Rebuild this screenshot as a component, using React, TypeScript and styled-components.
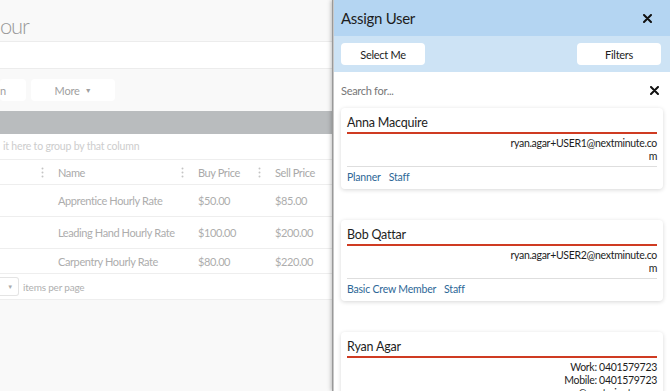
import React from 'react';
import styled, { createGlobalStyle } from 'styled-components';

const GlobalStyle = createGlobalStyle`
  html, body {
    margin: 0;
    padding: 0;
    background: #f9f9f9;
  }
  body {
    font-family: Lato, "Open Sans", sans-serif;
  }
`;

interface User {
  name: string;
  lines: string[];
  roles: string[];
}

const users: User[] = [
  {
    name: 'Anna Macquire',
    lines: ['ryan.agar+USER1@nextminute.co', 'm'],
    roles: ['Planner', 'Staff'],
  },
  {
    name: 'Bob Qattar',
    lines: ['ryan.agar+USER2@nextminute.co', 'm'],
    roles: ['Basic Crew Member', 'Staff'],
  },
  {
    name: 'Ryan Agar',
    lines: ['Work: 0401579723', 'Mobile: 0401579723', 'ryan.agar@nextminute.com'],
    roles: [],
  },
];

const rates = [
  { name: 'Apprentice Hourly Rate', buy: '$50.00', sell: '$85.00' },
  { name: 'Leading Hand Hourly Rate', buy: '$100.00', sell: '$200.00' },
  { name: 'Carpentry Hourly Rate', buy: '$80.00', sell: '$220.00' },
];

const Kebab = () => (
  <KebabIcon width="3" height="11" viewBox="0 0 3 11">
    <circle cx="1.5" cy="1.5" r="1" fill="#c4c4c4" />
    <circle cx="1.5" cy="5.5" r="1" fill="#c4c4c4" />
    <circle cx="1.5" cy="9.5" r="1" fill="#c4c4c4" />
  </KebabIcon>
);

const CloseIcon = () => (
  <svg width="9" height="9" viewBox="0 0 9 9">
    <path d="M1 1 L8 8 M8 1 L1 8" stroke="#111" strokeWidth="2" strokeLinecap="round" />
  </svg>
);

const App: React.FC = () => {
  return (
    <Screen>
      <GlobalStyle />
      <Page>
        <TitleBar>our</TitleBar>
        <WhiteBand />
        <Toolbar>
          <ToolButton $width={26} $align="flex-start">
            n
          </ToolButton>
          <ToolButton $width={84}>
            More <Caret>▼</Caret>
          </ToolButton>
        </Toolbar>
        <GrayBand />
        <GroupRow>it here to group by that column</GroupRow>
        <HeaderRow>
          <Cell $width={50}>
            <Kebab />
          </Cell>
          <Cell $width={140}>
            <span>Name</span>
            <Kebab />
          </Cell>
          <Cell $width={77}>
            <span>Buy Price</span>
            <Kebab />
          </Cell>
          <Cell $width={66}>
            <span>Sell Price</span>
          </Cell>
        </HeaderRow>
        {rates.map((r, i) => (
          <DataRow key={r.name} $height={i === 2 ? 25 : 32}>
            <Cell $width={50} />
            <Cell $width={140}>{r.name}</Cell>
            <Cell $width={77}>{r.buy}</Cell>
            <Cell $width={66}>{r.sell}</Cell>
          </DataRow>
        ))}
        <Pager>
          <PageSelect>▼</PageSelect>
          <span>items per page</span>
        </Pager>
      </Page>

      <Drawer>
        <DrawerHeader>
          <DrawerTitle>Assign User</DrawerTitle>
          <IconButton>
            <CloseIcon />
          </IconButton>
        </DrawerHeader>
        <ActionBar>
          <ActionButton>Select Me</ActionButton>
          <ActionButton>Filters</ActionButton>
        </ActionBar>
        <SearchRow>
          <SearchInput placeholder="Search for..." />
          <IconButton>
            <CloseIcon />
          </IconButton>
        </SearchRow>
        <CardList>
          {users.map((u) => (
            <Card key={u.name}>
              <CardName>{u.name}</CardName>
              <CardDetails>
                {u.lines.map((l, i) => (
                  <div key={i}>{l}</div>
                ))}
              </CardDetails>
              {u.roles.length > 0 && (
                <Roles>
                  {u.roles.map((r) => (
                    <Role key={r}>{r}</Role>
                  ))}
                </Roles>
              )}
            </Card>
          ))}
        </CardList>
      </Drawer>
    </Screen>
  );
};

export default App;

const Screen = styled.div`
  display: flex;
  width: 670px;
  height: 391px;
  overflow: hidden;
`;

const Page = styled.div`
  width: 333px;
  flex-shrink: 0;
  background: #f9f9f9;
  display: flex;
  flex-direction: column;
  overflow: hidden;
`;

const TitleBar = styled.div`
  height: 42px;
  box-sizing: border-box;
  border-bottom: 1px solid #ececec;
  font-size: 22px;
  font-weight: 300;
  letter-spacing: -1.2px;
  color: #999;
  line-height: 52px;
  white-space: nowrap;
`;

const WhiteBand = styled.div`
  height: 27px;
  box-sizing: border-box;
  background: #fff;
  border-bottom: 1px solid #ececec;
`;

const Toolbar = styled.div`
  height: 42px;
  display: flex;
  align-items: center;
  gap: 5px;
`;

const ToolButton = styled.div<{ $width: number; $align?: string }>`
  width: ${(p) => p.$width}px;
  height: 22px;
  background: #fff;
  border-radius: 4px;
  display: flex;
  align-items: center;
  justify-content: ${(p) => p.$align || 'center'};
  gap: 5px;
  font-size: 11px;
  letter-spacing: -0.2px;
  color: #a0a0a0;
`;

const Caret = styled.span`
  font-size: 7px;
`;

const GrayBand = styled.div`
  height: 23px;
  background: #b9bcbe;
`;

const GroupRow = styled.div`
  height: 26px;
  box-sizing: border-box;
  background: #fff;
  border-bottom: 1px solid #eee;
  font-size: 10.5px;
  letter-spacing: -0.2px;
  color: #cdcdcd;
  line-height: 25px;
  padding-left: 3px;
  white-space: nowrap;
`;

const HeaderRow = styled.div`
  height: 25px;
  box-sizing: border-box;
  display: flex;
  background: #fff;
  border-bottom: 1px solid #eee;
  font-size: 11px;
  letter-spacing: -0.4px;
  color: #a9a9a9;
`;

const DataRow = styled.div<{ $height: number }>`
  height: ${(p) => p.$height}px;
  box-sizing: border-box;
  display: flex;
  background: #fff;
  border-bottom: 1px solid #eee;
  font-size: 11px;
  letter-spacing: -0.4px;
  color: #adadad;
`;

const Cell = styled.div<{ $width: number }>`
  width: ${(p) => p.$width}px;
  flex-shrink: 0;
  display: flex;
  align-items: center;
  padding: 0 6px 0 8px;
  box-sizing: border-box;
  white-space: nowrap;
`;

const KebabIcon = styled.svg`
  margin-left: auto;
  flex-shrink: 0;
`;

const Pager = styled.div`
  height: 26px;
  box-sizing: border-box;
  background: #fff;
  border-bottom: 1px solid #eee;
  display: flex;
  align-items: center;
  gap: 4px;
  font-size: 10px;
  letter-spacing: -0.2px;
  color: #b0b0b0;
`;

const PageSelect = styled.div`
  width: 19px;
  height: 19px;
  box-sizing: border-box;
  border: 1px solid #e4e4e4;
  border-left: none;
  border-radius: 0 3px 3px 0;
  display: flex;
  align-items: center;
  justify-content: flex-end;
  padding-right: 5px;
  font-size: 6px;
  color: #aaa;
`;

const Drawer = styled.div`
  flex: 1;
  background: #fff;
  display: flex;
  flex-direction: column;
  box-shadow: -1px 0 0 #999, -2px 0 4px rgba(0, 0, 0, 0.25);
  border-left: 1px solid #c8c8c8;
  z-index: 1;
`;

const DrawerHeader = styled.div`
  height: 36px;
  flex-shrink: 0;
  background: #b4d5f2;
  display: flex;
  align-items: center;
  justify-content: space-between;
  padding: 0 18px 0 7px;
`;

const DrawerTitle = styled.div`
  font-size: 15px;
  letter-spacing: -0.3px;
  color: #1d1d1d;
  padding-bottom: 1px;
`;

const IconButton = styled.div`
  display: flex;
  align-items: center;
`;

const ActionBar = styled.div`
  height: 36px;
  flex-shrink: 0;
  background: #cde3f5;
  display: flex;
  align-items: center;
  justify-content: space-between;
  padding: 0 9px 0 7px;
`;

const ActionButton = styled.div`
  width: 84px;
  height: 22px;
  background: #fff;
  border-radius: 4px;
  display: flex;
  align-items: center;
  justify-content: center;
  font-size: 11px;
  letter-spacing: -0.3px;
  color: #1d1d1d;
`;

const SearchRow = styled.div`
  height: 36px;
  flex-shrink: 0;
  display: flex;
  align-items: center;
  justify-content: space-between;
  padding: 0 11px 0 7px;
`;

const SearchInput = styled.input`
  border: none;
  outline: none;
  padding: 0;
  font-family: inherit;
  font-size: 11px;
  letter-spacing: -0.3px;
  color: #333;
  width: 200px;
  &::placeholder {
    color: #777;
  }
`;

const CardList = styled.div`
  display: flex;
  flex-direction: column;
  gap: 31px;
  padding: 0 7px;
`;

const Card = styled.div`
  flex-shrink: 0;
  background: #fff;
  border-radius: 4px;
  box-shadow: 0 1px 4px rgba(0, 0, 0, 0.16);
  padding: 6px 6px 5px;
`;

const CardName = styled.div`
  font-size: 12.5px;
  letter-spacing: -0.2px;
  color: #1d1d1d;
  padding-bottom: 1px;
  border-bottom: 2px solid #cf3b22;
  line-height: 17px;
`;

const CardDetails = styled.div`
  text-align: right;
  font-size: 10.5px;
  letter-spacing: -0.3px;
  line-height: 13px;
  color: #1d1d1d;
  padding: 3px 0 3px;
  border-bottom: 1px solid #dedede;
`;

const Roles = styled.div`
  display: flex;
  gap: 8px;
  padding-top: 4px;
  font-size: 10.5px;
  letter-spacing: -0.2px;
  line-height: 13px;
  color: #2d6797;
`;

const Role = styled.span``;
